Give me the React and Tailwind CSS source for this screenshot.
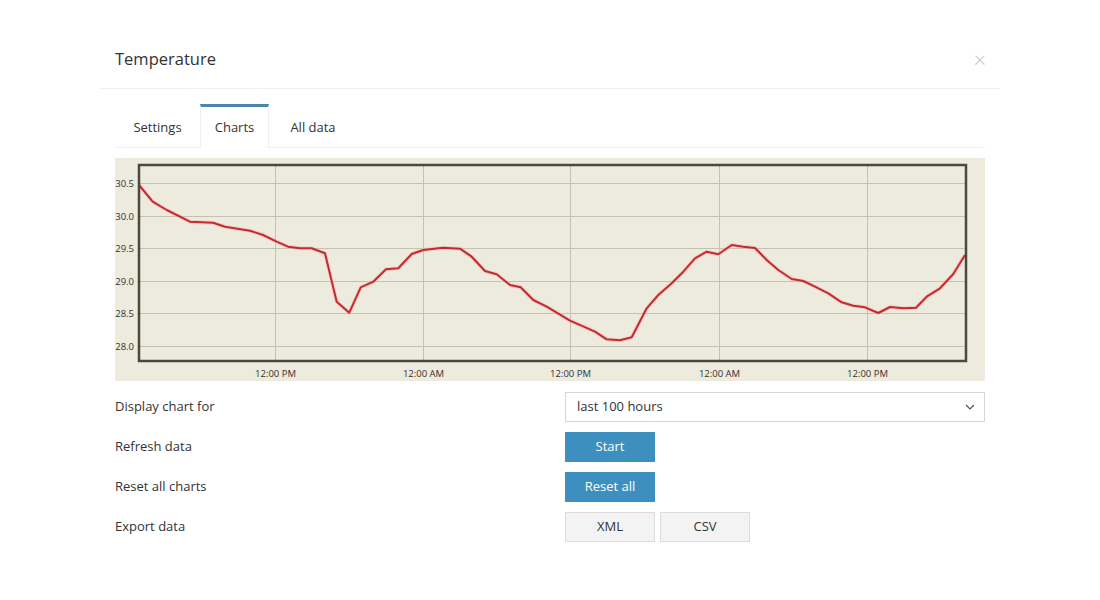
import React from "react";

const pts = [
  [139, 185], [152.7, 201.7], [166.7, 210], [190, 221.7], [213, 222.7], [225, 226.7], [250, 230.7], [263, 235],
  [276.7, 241.7], [288, 246.7], [300, 248.3], [311.7, 248.3], [325, 253.3], [336.7, 301.7], [349.3, 312.7],
  [360.7, 287.3], [373.3, 281.7], [386, 269.3], [398.3, 268.3], [411.7, 254], [423.3, 250], [443, 247.7],
  [460, 248.7], [471.7, 256.7], [485, 271], [496.7, 274.3], [510, 285], [520.7, 287.3], [533.3, 300],
  [546.7, 306.7], [570, 320.7], [595, 331.7], [606.7, 339.3], [620, 340.3], [631.7, 337.3], [646.7, 308.3],
  [658.3, 295], [671.7, 283.3], [683.3, 271.7], [695, 258.3], [706.7, 251.7], [718.3, 254.3], [731.7, 245],
  [743.3, 246.7], [755, 248], [766.7, 260], [778.3, 270], [791.7, 279], [803.3, 281], [815, 286.7],
  [828.3, 293.3], [841.7, 302.3], [853.3, 305.7], [865, 307.3], [878.3, 313], [890, 307], [903.3, 308.3],
  [916, 307.7], [926.7, 296.7], [940, 288.3], [953.3, 274], [965, 255],
];

const yTicks = ["30.5", "30.0", "29.5", "29.0", "28.5", "28.0"];
const xTicks = [
  [275.5, "12:00 PM"],
  [423.5, "12:00 AM"],
  [570.5, "12:00 PM"],
  [719.5, "12:00 AM"],
  [867.5, "12:00 PM"],
];

function Chart() {
  const yOf = (i) => Math.round(183 + i * 32.6) + 0.5;
  return (
    <svg width="870" height="223" className="block">
      <rect x="0" y="0" width="870" height="223" fill="#ecebdd" />
      <g transform="translate(-115,-158)">
        {yTicks.map((t, i) => (
          <g key={t}>
            <line x1="139" x2="966" y1={yOf(i)} y2={yOf(i)} stroke="#c3c2b2" strokeWidth="1" />
            <text x="134" y={yOf(i) + 3.5} textAnchor="end" fontSize="9.5" fill="#333" fontFamily="'Open Sans', sans-serif">
              {t}
            </text>
          </g>
        ))}
        {xTicks.map(([x, t], i) => (
          <g key={i}>
            <line x1={x} x2={x} y1="165" y2="361" stroke="#c3c2b2" strokeWidth="1" />
            <text x={x} y="376.5" textAnchor="middle" fontSize="9.5" fill="#333" fontFamily="'Open Sans', sans-serif">
              {t}
            </text>
          </g>
        ))}
        <polyline
          points={pts.map((p) => p.join(",")).join(" ")}
          fill="none"
          stroke="#f4b8b8"
          strokeWidth="4"
          strokeLinejoin="round"
          opacity="0.5"
        />
        <polyline
          points={pts.map((p) => p.join(",")).join(" ")}
          fill="none"
          stroke="#c42a2f"
          strokeWidth="2"
          strokeLinejoin="round"
        />
        <rect x="139" y="165" width="827" height="196" fill="none" stroke="#4a493b" strokeWidth="2.5" />
      </g>
    </svg>
  );
}

export default function App() {
  return (
    <div className="w-[1100px] h-[600px] bg-white pt-[30px] text-[#333]" style={{ fontFamily: "'Open Sans', sans-serif" }}>
      <div className="ml-[100px] w-[900px]">
        <div className="flex items-center justify-between px-[15px] py-[15px] border-b border-[#f0f0f0]">
          <div className="text-[16.5px] leading-[28px] text-[#333]">Temperature</div>
          <div className="text-[22px] leading-[28px] text-[#c4c4c4] font-light -mr-[1px]">×</div>
        </div>
        <div className="px-[15px] pt-[15px]">
          <div className="flex border-b border-[#eeeeee] text-[13px]">
            <div className="w-[85px] text-center pt-[10px] pb-[10px] leading-[20px] border-t-[3px] border-transparent">Settings</div>
            <div className="w-[69px] text-center pt-[10px] pb-[10px] leading-[20px] border-t-[3px] border-[#4a86a5] border-x border-x-[#f0f0f0] bg-white -mb-px">
              Charts
            </div>
            <div className="w-[88px] text-center pt-[10px] pb-[10px] leading-[20px] border-t-[3px] border-transparent">All data</div>
          </div>
          <div className="mt-[10px]">
            <Chart />
          </div>
          <div className="mt-[11px] grid grid-cols-[450px_1fr] gap-y-[10px] text-[13px] items-center">
            <div>Display chart for</div>
            <div className="h-[30px] border border-[#d6d6d6] flex items-center justify-between pl-[11px] pr-[9px]">
              <span>last 100 hours</span>
              <svg width="10" height="6" viewBox="0 0 10 6">
                <path d="M1 1 L5 5 L9 1" fill="none" stroke="#555" strokeWidth="1.2" />
              </svg>
            </div>
            <div>Refresh data</div>
            <div>
              <button className="w-[90px] h-[30px] bg-[#3d8fc0] text-white text-[13px]">Start</button>
            </div>
            <div>Reset all charts</div>
            <div>
              <button className="w-[90px] h-[30px] bg-[#3d8fc0] text-white text-[13px]">Reset all</button>
            </div>
            <div>Export data</div>
            <div className="flex gap-[5px]">
              <button className="w-[90px] h-[30px] bg-[#f3f3f3] border border-[#dcdcdc] text-[#333] text-[13px]">XML</button>
              <button className="w-[90px] h-[30px] bg-[#f3f3f3] border border-[#dcdcdc] text-[#333] text-[13px]">CSV</button>
            </div>
          </div>
        </div>
      </div>
    </div>
  );
}
